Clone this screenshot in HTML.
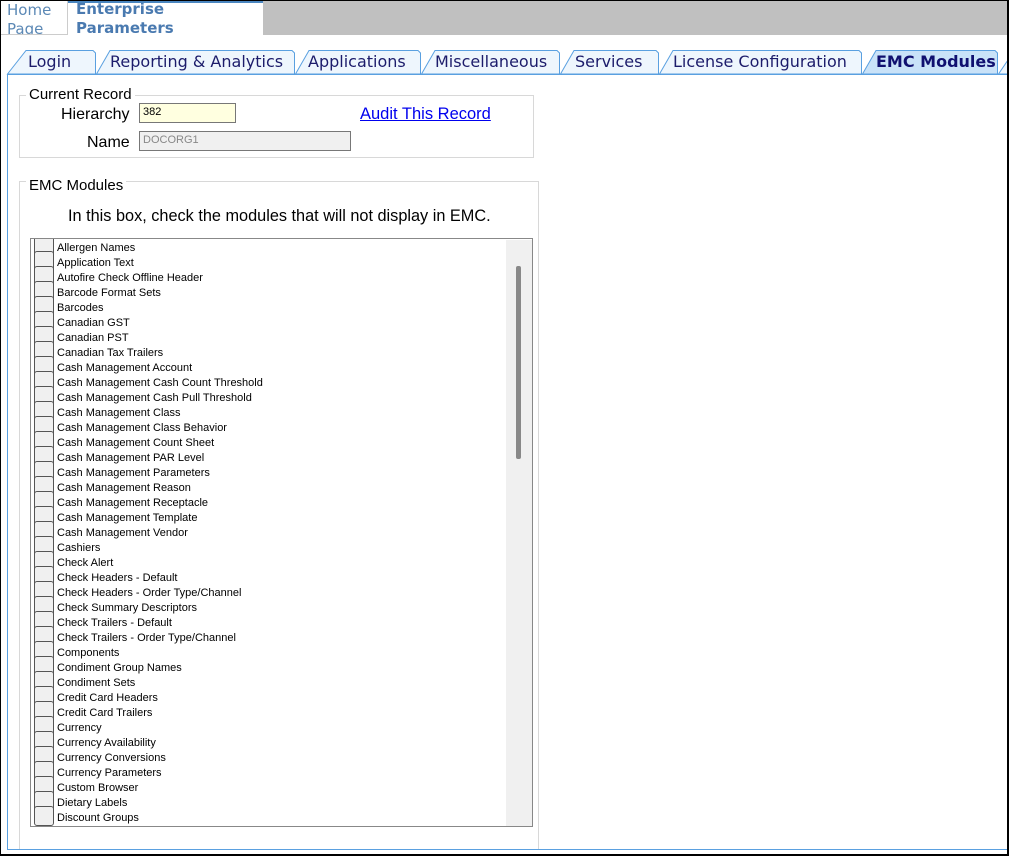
<!DOCTYPE html>
<html><head><style>
*{margin:0;padding:0;box-sizing:border-box}
body{width:1009px;height:856px;overflow:hidden;background:#fff;font-family:"Liberation Sans",Arial,sans-serif;position:relative}
.frame{position:absolute;left:0;top:0;width:1009px;height:856px;border:1px solid #000;border-right:2px solid #000;border-bottom:2px solid #000;pointer-events:none;z-index:10}
.abs{position:absolute}
.tabt{position:absolute;top:52px;font-family:"DejaVu Sans",Verdana,sans-serif;font-size:16px;color:#1c1c6b;white-space:nowrap}
.row{position:absolute;left:0;height:15px;font-size:11px;color:#000;line-height:15px;white-space:nowrap}
.cb{position:absolute;left:3px;width:20px;height:20px;border:1px solid #555;border-radius:3px;background:#f0f0f0}
</style></head><body>
<div class="frame"></div>
<div class="abs" style="left:263px;top:0;width:746px;height:35px;background:#c0c0c0"></div>
<div class="abs" style="left:1px;top:0;width:67px;height:35px;border-right:1px solid #ccc;border-bottom:1px solid #ccc;overflow:hidden;font-family:'DejaVu Sans',Verdana,sans-serif;font-size:15px;color:#5b88b5;line-height:19px;padding-left:6px;padding-top:1px">Home<br>Page</div>
<div class="abs" style="left:68px;top:0;width:195px;height:36px;border-top:3px solid #4a86c0;overflow:hidden;font-family:'DejaVu Sans',Verdana,sans-serif;font-size:15px;font-weight:bold;color:#4a7ab0;line-height:19px;padding-left:8px"><div style="margin-top:-3px">Enterprise<br>Parameters</div></div>
<svg class="abs" style="left:0;top:0" width="1009" height="856">
<g stroke="#5aa0e0" stroke-width="1" fill="#eef6fd">
<polygon points="7.5,74 26,50.5 93,50.5 95.5,53 95.5,74"/>
<polygon points="96.5,74 110,50.5 292,50.5 294.5,53 294.5,74"/>
<polygon points="295.5,74 309,50.5 418,50.5 420.5,53 420.5,74"/>
<polygon points="421.5,74 435,50.5 557,50.5 559.5,53 559.5,74"/>
<polygon points="560.5,74 574,50.5 656,50.5 658.5,53 658.5,74"/>
<polygon points="659.5,74 673,50.5 859,50.5 861.5,53 861.5,74"/>
<polygon points="862.5,74 876,50.5 995,50.5 997.5,53 997.5,74" fill="#c9e2f8"/>
<polygon points="998.5,74 1008,60 1008,74"/>
</g>
<line x1="7.5" y1="74.5" x2="1008" y2="74.5" stroke="#5aa0e0"/>
<line x1="7.5" y1="74" x2="7.5" y2="850" stroke="#5aa0e0"/>
<line x1="7.5" y1="849.5" x2="1008" y2="849.5" stroke="#5aa0e0"/>
</svg>
<div class="tabt" style="left:28px">Login</div>
<div class="tabt" style="left:110px">Reporting &amp; Analytics</div>
<div class="tabt" style="left:308px">Applications</div>
<div class="tabt" style="left:435px">Miscellaneous</div>
<div class="tabt" style="left:575px">Services</div>
<div class="tabt" style="left:673px">License Configuration</div>
<div class="tabt" style="left:876px;font-weight:bold;color:#101070">EMC Modules</div>
<div class="abs" style="left:19px;top:95px;width:515px;height:63px;border:1px solid #d8d8d8"></div>
<div class="abs" style="left:26px;top:86px;background:#fff;padding:0 3px;font-size:15px">Current Record</div>
<div class="abs" style="left:61px;top:106px;font-size:16px">Hierarchy</div>
<div class="abs" style="left:139px;top:103px;width:97px;height:20px;border:1px solid #777;background:#ffffe0;font-size:11px;padding:2px 3px">382</div>
<div class="abs" style="left:87px;top:134px;font-size:16px">Name</div>
<div class="abs" style="left:139px;top:131px;width:212px;height:20px;border:1px solid #777;background:#f0f0f0;font-size:11px;color:#888;padding:2px 3px">DOCORG1</div>
<div class="abs" style="left:360px;top:105px;font-size:16.5px;color:#0000ee;text-decoration:underline">Audit This Record</div>
<div class="abs" style="left:19px;top:181px;width:520px;height:668px;border:1px solid #d8d8d8;border-bottom:none"></div>
<div class="abs" style="left:26px;top:177px;background:#fff;padding:0 3px;font-size:15px">EMC Modules</div>
<div class="abs" style="left:68px;top:207px;font-size:16.3px">In this box, check the modules that will not display in EMC.</div>
<div class="abs" style="left:30px;top:238px;width:503px;height:589px;border:1px solid #888;overflow:hidden">
<div class="abs" style="left:475px;top:1px;width:26px;height:587px;background:#f0f0f0"></div>
<div class="abs" style="left:485px;top:27px;width:5px;height:193px;background:#888;border-radius:2px"></div>
<div class="abs" style="left:0;top:1px;width:470px;height:590px" id="l"></div>
</div>
<script>
var items=["Allergen Names","Application Text","Autofire Check Offline Header","Barcode Format Sets","Barcodes","Canadian GST","Canadian PST","Canadian Tax Trailers","Cash Management Account","Cash Management Cash Count Threshold","Cash Management Cash Pull Threshold","Cash Management Class","Cash Management Class Behavior","Cash Management Count Sheet","Cash Management PAR Level","Cash Management Parameters","Cash Management Reason","Cash Management Receptacle","Cash Management Template","Cash Management Vendor","Cashiers","Check Alert","Check Headers - Default","Check Headers - Order Type/Channel","Check Summary Descriptors","Check Trailers - Default","Check Trailers - Order Type/Channel","Components","Condiment Group Names","Condiment Sets","Credit Card Headers","Credit Card Trailers","Currency","Currency Availability","Currency Conversions","Currency Parameters","Custom Browser","Dietary Labels","Discount Groups"];
var h="";
for(var i=0;i<items.length;i++){h+='<div class="cb" style="top:'+(i*15-4)+'px"></div>';}
for(var i=0;i<items.length;i++){h+='<div class="row" style="top:'+(i*15+1)+'px;left:26px">'+items[i]+'</div>';}
document.getElementById('l').innerHTML=h;
</script>
</body></html>
